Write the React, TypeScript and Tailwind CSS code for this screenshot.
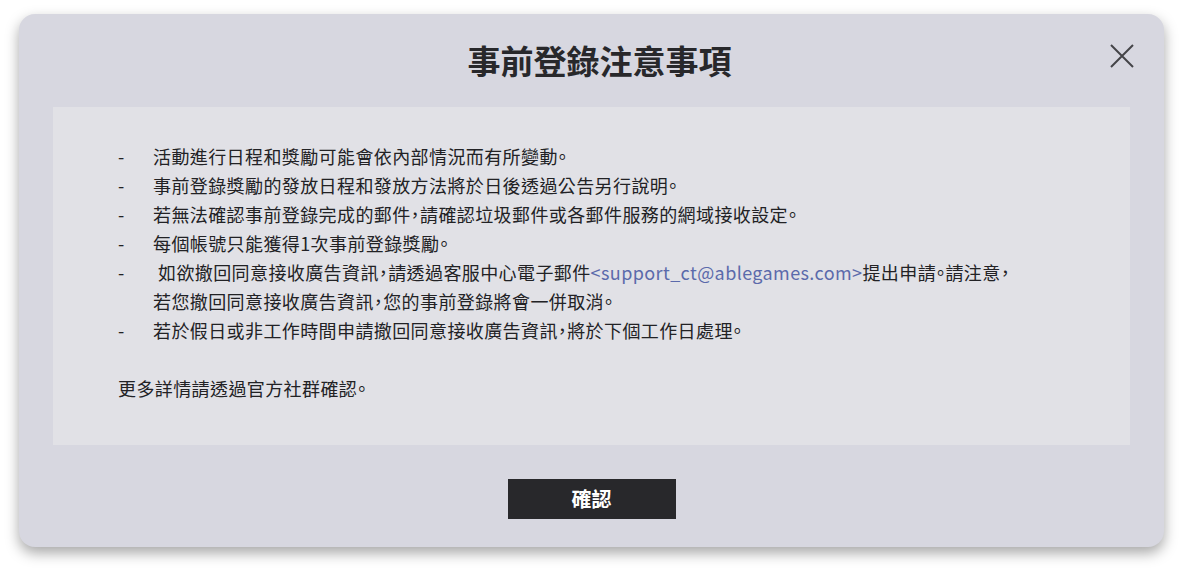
export default function App() {
  const items: React.ReactNode[] = [
    '活動進行日程和獎勵可能會依內部情況而有所變動。',
    '事前登錄獎勵的發放日程和發放方法將於日後透過公告另行說明。',
    '若無法確認事前登錄完成的郵件，請確認垃圾郵件或各郵件服務的網域接收設定。',
    '每個帳號只能獲得1次事前登錄獎勵。',
    <>
      <span className="pl-[5px]">如欲撤回同意接收廣告資訊，請透過客服中心電子郵件</span>
      <span className="text-[#5b6aab]">&lt;support_ct@ablegames.com&gt;</span>
      提出申請。請注意，
      <br />
      若您撤回同意接收廣告資訊，您的事前登錄將會一併取消。
    </>,
    '若於假日或非工作時間申請撤回同意接收廣告資訊，將於下個工作日處理。',
  ]

  return (
    <main
      lang="zh-TW"
      className="min-h-screen bg-white pl-[19px] pt-[14px]"
      style={{ fontFamily: '"Noto Sans CJK TC", "Noto Sans", sans-serif' }}
    >
      <div className="relative flex w-[1145px] flex-col items-center rounded-[16px] bg-[#d7d7e0] px-[34px] pb-[28px] pt-[22px] shadow-[0_6px_14px_rgba(0,0,0,0.35)]">
        <h1 className="h-[48px] pl-[16px] text-[33px] font-bold leading-[48px] text-[#28282b]">
          事前登錄注意事項
        </h1>
        <button className="absolute right-[30px] top-[30px] text-[#444448]">
          <svg width="24" height="24" viewBox="0 0 24 24" fill="none" stroke="currentColor" strokeWidth={2}>
            <path d="M1 1L23 23M23 1L1 23" />
          </svg>
        </button>

        <div className="mt-[23px] w-full bg-[#e1e1e6] pb-[42px] pl-[65px] pr-[30px] pt-[35px] text-[18px] leading-[29px] tracking-[0.4px] text-[#222225] [font-feature-settings:'halt']">
          <ul>
            {items.map((item, i) => (
              <li key={i} className="flex">
                <span className="w-[35px] shrink-0">-</span>
                <span>{item}</span>
              </li>
            ))}
          </ul>
          <p className="mt-[29px]">更多詳情請透過官方社群確認。</p>
        </div>

        <button className="mt-[34px] h-[40px] w-[168px] bg-[#28282b] text-[20px] font-bold text-white">
          確認
        </button>
      </div>
    </main>
  )
}
